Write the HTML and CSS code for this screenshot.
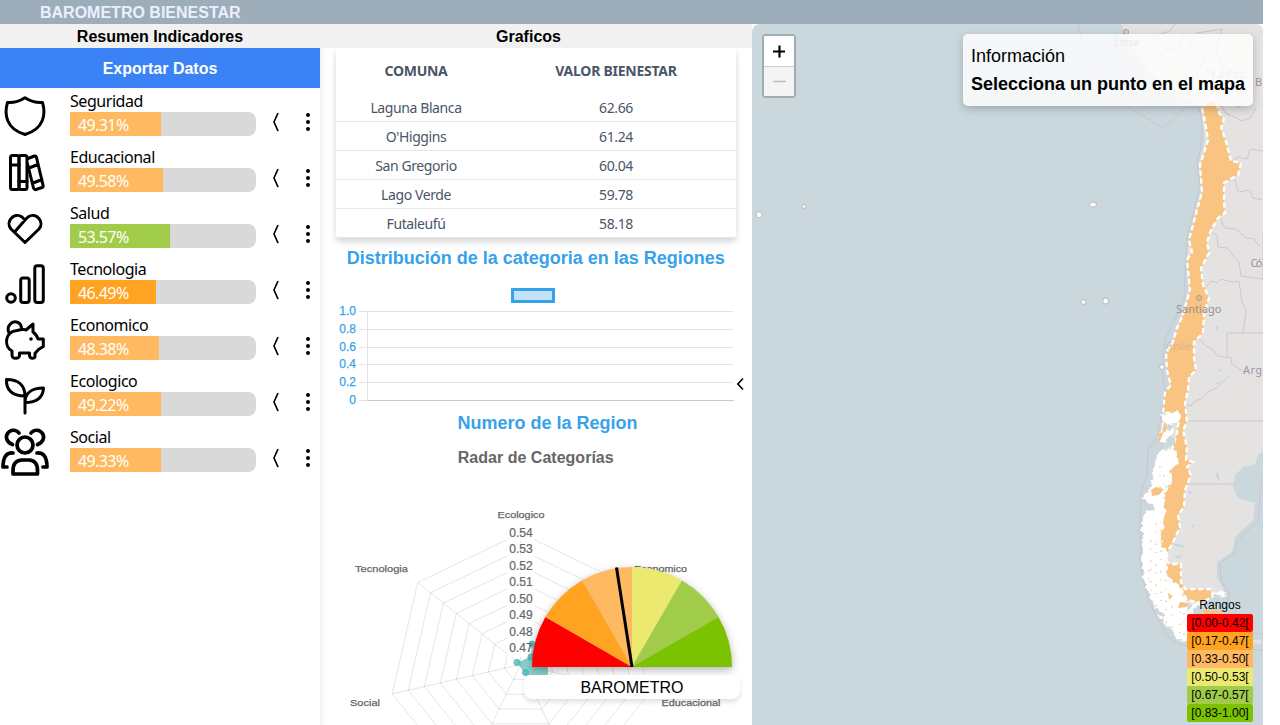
FILE: index.html
```html
<!DOCTYPE html>
<html lang="es">
<head>
<meta charset="utf-8">
<title>Barometro Bienestar</title>
<link rel="stylesheet" href="styles.css">
</head>
<body>
<div class="app">
<header class="topbar">BAROMETRO BIENESTAR</header>
<main class="columns">
<section class="summary">
  <h2 class="heading">Resumen Indicadores</h2>
  <button class="export">Exportar Datos</button>
  <div class="row"><svg class="icon" viewBox="0 0 50 50"><path d="M25 6.700C19 10.500 13 12 7.500 11.500C4 23 6 38 25 43.500C44 38 46 23 42.500 11.500C37 12 31 10.500 25 6.700Z"/></svg><div class="meter"><span class="name">Seguridad</span><div class="track"><div class="fill" style="width:49%">49.31%</div></div></div><svg class="tools" viewBox="0 0 64 56"><path d="M22 25L18 34L22 43"/><circle cx="52" cy="27" r="2"/><circle cx="52" cy="34" r="2"/><circle cx="52" cy="41" r="2"/></svg></div>
  <div class="row"><svg class="icon" viewBox="0 0 50 50"><rect x="10.500" y="8.500" width="8.500" height="34" rx="2"/><rect x="19" y="8.500" width="8" height="34" rx="2"/><path d="M10.500 18h8.500M19 34.500h8M28 11.500L34.500 9Q36 8.500 36.500 10.500L43 38Q43.500 40 42 40.500L36 42.500Q34 43 33.500 41L27.500 17M29 21L38 17.500M33 36L42 32.500"/></svg><div class="meter"><span class="name">Educacional</span><div class="track"><div class="fill" style="width:49.9%">49.58%</div></div></div><svg class="tools" viewBox="0 0 64 56"><path d="M22 25L18 34L22 43"/><circle cx="52" cy="27" r="2"/><circle cx="52" cy="34" r="2"/><circle cx="52" cy="41" r="2"/></svg></div>
  <div class="row"><svg class="icon" viewBox="0 0 50 50"><path d="M25 39.500L11 26C5 19 14 8.500 22 14L25 17L28 14C36 8.500 45 19 39 26ZM25 17L15.500 28"/></svg><div class="meter"><span class="name">Salud</span><div class="track"><div class="fill green" style="width:53.7%">53.57%</div></div></div><svg class="tools" viewBox="0 0 64 56"><path d="M22 25L18 34L22 43"/><circle cx="52" cy="27" r="2"/><circle cx="52" cy="34" r="2"/><circle cx="52" cy="41" r="2"/></svg></div>
  <div class="row"><svg class="icon" viewBox="0 0 50 50"><circle cx="11" cy="39" r="4.300"/><rect x="20.700" y="19" width="8.500" height="24.500" rx="2.500"/><rect x="34.800" y="6.700" width="8.500" height="36.800" rx="2.500"/></svg><div class="meter"><span class="name">Tecnologia</span><div class="track"><div class="fill dark" style="width:46.49%">46.49%</div></div></div><svg class="tools" viewBox="0 0 64 56"><path d="M22 25L18 34L22 43"/><circle cx="52" cy="27" r="2"/><circle cx="52" cy="34" r="2"/><circle cx="52" cy="41" r="2"/></svg></div>
  <div class="row"><svg class="icon" viewBox="0 0 50 50"><path d="M17 15.500C22 14 25 14.500 26 15L33 9V17Q37 20 38 24H43.300V31.500L38.500 34.500L35 38.500V42Q34.500 43.300 32.500 43.300Q30 43.300 29.500 41V38H19.500V41Q18.500 43.300 16 43.300Q12 43.500 12 40V36C4 32 4 17 17 15.500ZM9 18C6 11 12 5 18 7.500Q21.500 9 21.500 14"/><circle class="dot" cx="31" cy="24" r="1.800"/></svg><div class="meter"><span class="name">Economico</span><div class="track"><div class="fill" style="width:48%">48.38%</div></div></div><svg class="tools" viewBox="0 0 64 56"><path d="M22 25L18 34L22 43"/><circle cx="52" cy="27" r="2"/><circle cx="52" cy="34" r="2"/><circle cx="52" cy="41" r="2"/></svg></div>
  <div class="row"><svg class="icon" viewBox="0 0 50 50"><path d="M25 42V25C25 14 18 8.500 6.500 8.500C6 19 12 25 25 25M25 31.500C25 22 32 17 43.500 17C43 26 38 31.500 25 31.500"/></svg><div class="meter"><span class="name">Ecologico</span><div class="track"><div class="fill" style="width:49%">49.22%</div></div></div><svg class="tools" viewBox="0 0 64 56"><path d="M22 25L18 34L22 43"/><circle cx="52" cy="27" r="2"/><circle cx="52" cy="34" r="2"/><circle cx="52" cy="41" r="2"/></svg></div>
  <div class="row"><svg class="icon people" viewBox="0 0 50 50"><circle cx="25" cy="18" r="8"/><path d="M13 47V43.500Q13 33.500 22 33H29Q37.500 33.500 37.500 43.500V47ZM12.500 17.500C7 15.500 5 10.500 7.500 6.500C10 2.500 16 2 19 6M37.500 17.500C43 15.500 45 10.500 42.500 6.500C40 2.500 34 2 31 6M13 26C6 25.500 3 30.500 3 40H7M37 26C44 25.500 47 30.500 47 40H43"/></svg><div class="meter"><span class="name">Social</span><div class="track"><div class="fill" style="width:49%">49.33%</div></div></div><svg class="tools" viewBox="0 0 64 56"><path d="M22 25L18 34L22 43"/><circle cx="52" cy="27" r="2"/><circle cx="52" cy="34" r="2"/><circle cx="52" cy="41" r="2"/></svg></div>
</section>
<section class="charts">
  <h2 class="heading graph-heading">Graficos</h2>
  <table class="ranking">
    <thead><tr><th>COMUNA</th><th>VALOR BIENESTAR</th></tr></thead>
    <tbody><tr><td>Laguna Blanca</td><td>62.66</td></tr><tr><td>O'Higgins</td><td>61.24</td></tr><tr><td>San Gregorio</td><td>60.04</td></tr><tr><td>Lago Verde</td><td>59.78</td></tr><tr><td>Futaleufú</td><td>58.18</td></tr></tbody>
  </table>
  <svg class="plots" viewBox="320 238 432 487">
    <g class="blue title" text-anchor="middle"><text x="535.700" y="264" textLength="378">Distribución de la categoria en las Regiones</text><text x="547.500" y="429" textLength="180">Numero de la Region</text></g>
    <rect x="512.500" y="289.500" width="41" height="12" fill="#c2e2f9" stroke="#36a2eb" stroke-width="3"/>
    <path d="M359 311.500H733M359 329.500H733M359 347.500H733M359 364.500H733M359 382.500H733M359 400.500H733M367.500 311V401" stroke="#e3e3e3"/><path d="M367 400.500H734" stroke="#cacaca"/>
    <g class="blue tick" text-anchor="end"><text x="356" y="315">1.0</text><text x="356" y="333">0.8</text><text x="356" y="351">0.6</text><text x="356" y="368">0.4</text><text x="356" y="386">0.2</text><text x="356" y="404">0</text></g>
    <text class="radar-title" x="535.700" y="463" text-anchor="middle" textLength="156">Radar de Categorías</text>
    <defs><path id="ring" vector-effect="non-scaling-stroke" d="M0-1L.7818-.6235L.9749.2225L.4339.901L-.4339.901L-.9749.2225L-.7818-.6235Z"/></defs>
    <g transform="translate(520.500 664.600)" fill="none" stroke="#000" stroke-opacity=".1">
      <use href="#ring" transform="scale(131.500)"/><use href="#ring" transform="scale(115.100)"/><use href="#ring" transform="scale(98.600)"/><use href="#ring" transform="scale(82.200)"/><use href="#ring" transform="scale(65.700)"/><use href="#ring" transform="scale(49.300)"/><use href="#ring" transform="scale(32.900)"/><use href="#ring" transform="scale(16.400)"/>
      <path d="M0 0V-131.500M0 0L102.800-82M0 0L128.200 29.300M0 0L57 118.500M0 0L-57 118.500M0 0L-128.200 29.300M0 0L-102.800-82"/>
    </g>
    <path fill="#fff" fill-opacity=".75" d="M507 525h28v132h-28z"/>
    <path d="M517 662.500L531 656.500L532 644H548V675H526Z" fill="#4bb5b5" fill-opacity=".65"/>
    <g fill="#4bc0c0" fill-opacity=".8" stroke="#4bb5b5"><circle cx="517" cy="662.500" r="3"/><circle cx="531" cy="657" r="3"/><circle cx="532" cy="644" r="3"/><circle cx="525.500" cy="672.500" r="3"/></g>
    <g class="radar-tick" text-anchor="middle"><text x="521" y="537">0.54</text><text x="521" y="553">0.53</text><text x="521" y="570">0.52</text><text x="521" y="586">0.51</text><text x="521" y="603">0.50</text><text x="521" y="619">0.49</text><text x="521" y="636">0.48</text><text x="521" y="652">0.47</text></g>
    <g class="axis"><text x="497.500" y="518" textLength="47" lengthAdjust="spacingAndGlyphs">Ecologico</text><text x="355" y="572" textLength="53" lengthAdjust="spacingAndGlyphs">Tecnologia</text><text x="634" y="572" textLength="53" lengthAdjust="spacingAndGlyphs">Economico</text><text x="350" y="706" textLength="30" lengthAdjust="spacingAndGlyphs">Social</text><text x="661.500" y="706" textLength="59" lengthAdjust="spacingAndGlyphs">Educacional</text></g>
  </svg>
  <svg class="gauge" viewBox="0 0 216 108">
    <g transform="translate(108 103)"><path d="M0 0L-100 0A100 100 0 0 1-86.600-50Z" fill="red"/><path d="M0 0L-86.600-50A100 100 0 0 1-50-86.600Z" fill="#ffa321"/><path d="M0 0L-50-86.600A100 100 0 0 1 0-100Z" fill="#ffb961"/><path d="M0 0V-100A100 100 0 0 1 50-86.600Z" fill="#ece970"/><path d="M0 0L50-86.600A100 100 0 0 1 86.600-50Z" fill="#a1cc49"/><path d="M0 0L86.600-50A100 100 0 0 1 100 0Z" fill="#7bc200"/><path d="M0 0L-15.500-99.500" stroke="#000" stroke-width="3"/></g>
  </svg>
  <div class="gauge-label">BAROMETRO</div>
  <svg class="collapse" viewBox="0 0 8 14"><path d="M7 1.500L1.800 7L7 12.500"/></svg>
</section>
<section class="map">
  <svg class="geography" viewBox="752 24 511 701">
    <defs>
      <filter id="coast" x="-10%" y="-5%" width="120%" height="110%"><feTurbulence type="fractalNoise" baseFrequency=".16" numOctaves="2" seed="4"/><feDisplacementMap in="SourceGraphic" scale="9" xChannelSelector="R" yChannelSelector="G"/></filter>
    </defs>
    <path class="land" d="M1121 24L1128 40L1138 57L1150 73L1173 93L1201 107L1205 140L1199 165L1201 192L1190 237L1187 260L1189 290L1173 340L1166 355L1170 385L1163 415L1166 450L1155 480L1158 540L1170 600L1195 605L1225 593L1217 577L1217 562L1232 552L1235 537L1253 520L1255 503L1238 498L1233 487L1235 475L1243 467L1255 464L1258 455L1263 451V24Z"/>
    <path class="land" d="M1252 640l9 0v4l-9-1z"/>
    <g class="water"><path d="M1206 69l9 2l-2 7l-6-4ZM1225 111l6 4l-2 2zM1236 105l5 1l-3 3zM1216 326h2v5h-2zM1218 370l5-1l-2 3zM1215 384l6-4l-3 5zM1215 474l3-2l2 10l-3-3zM1188 490l6 3l-5 1zM1173 543l10 2l1 3l-9-2zM1173 555l9 1l-3 3zM1192 524l3 2l-3 2z"/></g>
    <g class="borders"><path d="M1078 24L1083 46L1096 58L1106 83L1128 106L1145 117L1163 128L1186 107H1203M1143 54Q1150 35 1170 31L1175 24M1139 55L1156 65L1164 49L1177 51L1184 34M1183 88L1197 77L1204 58L1190 45L1197 33L1222 29L1216 52L1228 82M1222 106L1225 113L1233 116L1241 121L1250 118L1256 108M1231 162L1238 157L1247 159L1250 149L1263 151M1225 180L1235 180L1238 192L1250 190L1253 198L1263 200M1220 218L1225 228L1236 229L1246 238L1254 239L1259 246M1209 231L1217 235L1218 247L1227 248L1239 262L1241 276L1263 279M1204 290L1211 281L1217 283L1221 279L1232 282L1239 281L1242 302L1246 311L1243 333H1263M1198 337L1206 346L1213 350L1218 356L1232 358L1231 363L1246 373M1227 358V333H1243M1230 375L1218 387L1208 392L1203 398L1195 401L1191 406L1185 404M1188 421H1263M1188 484H1234M1263 233V281"/><path d="M1199 107Q1206 133 1197 163L1200 185L1187 238L1185 275L1184 300L1165 340L1162 370L1165 390L1158 435L1148 450L1147 475L1141 493L1140 530L1141 570L1149 603L1168 637L1180 645L1263 650"/><path d="M1262 478L1258 520L1237 542L1235 553L1220 563L1221 580L1230 595L1226 607L1233 630L1263 634"/></g>
    <path class="chile" d="M1211.700 97L1217 105L1219 113L1224 119L1221 128L1225 138L1231 161L1241 163L1238 175L1224 183V203L1225 213L1218 218L1211 230L1207 242L1209 253L1201 268L1203 285L1209 298L1204 313L1203 333L1194 342V358L1196 370L1189 377L1188 390L1185 403L1187 422L1183 430L1187 447L1186 460L1193 462L1187 467L1191 475L1185 490L1184 507L1178 515L1180 527L1173 542L1167 553V562L1171 564H1181V582L1185 589H1210L1213 596L1202 603L1187 600L1180 587L1167 577L1165 572L1166 555L1158 540L1162 525L1163 510L1162 497L1172 480L1169 470L1177 463L1172 450L1177 433L1180 413H1163L1165 393L1170.700 385L1167 370L1166 353L1173 342L1177 328L1183 315L1190 290L1187 260L1192 252L1189 240L1197 210L1202 192L1200 165L1204 153L1208 140L1206 127L1202 107Z"/>
    <g class="fjords" filter="url(#coast)"><path d="M1162 414L1180 413L1180 420L1171 422L1174 432L1166 440L1161 443L1158 440L1162 426Z"/><path d="M1164 448L1174 451L1178 463L1169 470L1171 481L1163 495L1165 510L1163 525L1160 541L1168 554L1166 577L1180 589L1186 602L1202 604L1190 614L1189 641L1180 640L1167 626L1155 608L1147 587L1142 566L1142 520L1149 506L1143 497L1151 487L1153 470L1156 458Z"/><path d="M1212 589L1227 594L1222 598L1214 593Z"/></g>
    <g class="inland"><path d="M1164 422l3 2l-1 7l-4 3zM1160 432l3 2l-3 7l-3-1zM1151 490l5-3l8 2l-5 6l-7 1zM1180 602l9 1l-2 4l-9 1zM1168 593l5 3l-4 4zM1204 609l18 2v18h-22z"/><path class="specks" d="M1160 466V494M1164 475V492M1151 540V608M1156 523V615M1161 530V622M1149 570V590M1166 580V624M1172 606V631M1180 603V634M1184 613V636"/></g>
    <g class="water"><path d="M1156 610l9 4l-1 3l-8-3zM1188 604l5 1l-6 7zM1214 594l8 2l-4 3l-5-3zM1168 424l5 2l-3 5l-4-2zM1169 436l6 2v6l-9 4v-4zM1145 503l8 1l2 6l-8 1z"/></g>
    <g class="islets"><circle cx="759" cy="214.800" r="3"/><circle cx="804" cy="206.500" r="2"/><ellipse cx="1093" cy="204.500" rx="3.500" ry="2.500"/><circle cx="1083.500" cy="302" r="2.500"/><circle cx="1105.700" cy="301" r="3"/><circle cx="1162" cy="367" r="2.500"/></g>
    <g class="places"><circle cx="1126" cy="32" r="2.500"/><circle class="pin" cx="1126" cy="32" r=".7"/><circle cx="1199" cy="298" r="2.500"/><circle class="pin" cx="1199" cy="298" r=".7"/><text x="1114" y="46">Lima</text><text x="1212" y="78" opacity=".6">La Paz</text><text x="1176" y="313">Santiago</text><text x="1166" y="350" opacity=".3">Chile</text><text x="1250.500" y="267" textLength="12">Có</text><text x="1243" y="374" fill="#a690a6" textLength="19">Arg</text><text x="1255" y="86" fill="#a690a6">B</text></g>
  </svg>
  <div class="zoom"><svg viewBox="0 0 30 30"><path d="M9 15.500H21M15.500 9.500V21.500"/></svg><svg class="disabled" viewBox="0 0 30 30"><path d="M9 15H22"/></svg></div>
  <div class="info"><span>Información</span><strong>Selecciona un punto en el mapa</strong></div>
  <div class="legend"><span class="legend-title">Rangos</span><span class="r1">[0.00-0.42[</span><span class="r2">[0.17-0.47[</span><span class="r3">[0.33-0.50[</span><span class="r4">[0.50-0.53[</span><span class="r5">[0.67-0.57[</span><span class="r6">[0.83-1.00]</span></div>
</section>
</main>
</div>
</body>
</html>
```
FILE: styles.css
```css
* { box-sizing: border-box; }
body { margin: 0; overflow: hidden; background: #fff; font: 16px/24px "Liberation Sans", Arial, sans-serif; }
.app { width: 1263px; height: 725px; overflow: hidden; }
.topbar { height: 24px; padding-left: 40px; background: #9eadba; color: #ebf0ff; font-weight: bold; line-height: 26px; }
.columns { display: grid; grid-template-columns: 320px 432px 511px; height: 701px; background: #fff; }
.heading { position: relative; margin: 0; height: 24px; background: #f1f1f1; text-align: center; font-size: 16px; line-height: 26px; }
.summary { box-shadow: 0 4px 6px rgba(0,0,0,.12); clip-path: inset(0 -8px 0 0); }
.export { display: block; width: 100%; height: 40px; padding: 1px 0 0; border: 0; background: #3b82f6; color: #fff; font: bold 16px/40px "Liberation Sans", Arial, sans-serif; }
.row { display: grid; grid-template-columns: 50px 186px 64px; column-gap: 20px; height: 56px; align-items: center; }
.row .tools { margin-left: -20px; }
.icon { width: 50px; height: 50px; fill: none; stroke: #000; stroke-width: 3; stroke-linecap: round; stroke-linejoin: round; }
.people { stroke-width: 3.7; }
.icon .dot { fill: #000; stroke: none; }
.meter { height: 56px; font-family: "Noto Sans", sans-serif; }
.name { display: block; height: 24px; line-height: 27px; letter-spacing: -.45px; }
.track { height: 24px; border-radius: 0 8px 8px 0; background: #d9d9d9; }
.fill { height: 24px; padding-left: 8px; color: #fff; background: #ffb961; line-height: 27px; letter-spacing: -.6px; }
.fill.green { background: #a1cc49; }
.fill.dark { background: #ffa321; }
.tools { width: 64px; height: 56px; }
.tools path { fill: none; stroke: #000; stroke-width: 1.7; stroke-linejoin: round; }
.charts { position: relative; }
.graph-heading { padding-right: 15px; }
.ranking { width: 400px; margin: 0 16px; border-spacing: 0; table-layout: fixed; border-radius: 0 0 4px 4px; box-shadow: 0 4px 6px rgba(0,0,0,.16); color: #4a5568; font: 14px/20px "Noto Sans", sans-serif; text-align: center; }
.ranking th { width: 50%; height: 45px; padding: 0 40px 0 0; font-size: 14px; letter-spacing: -.25px; white-space: nowrap; }
.ranking td { height: 29px; padding: 1px 40px 0 0; border-bottom: 1px solid #e5e7eb; letter-spacing: -.4px; }
.plots { display: block; width: 432px; height: 487px; }
.blue { fill: #36a2eb; }
.title { font-size: 18px; font-weight: bold; }
.tick { font-size: 12px; stroke: #36a2eb; stroke-width: .25px; }
.radar-title { fill: #666; font-size: 16px; font-weight: bold; }
.radar-tick { fill: #666; font-size: 12px; stroke: #666; stroke-width: .2px; }
.axis { fill: #666; font-size: 9.8px; stroke: #666; stroke-width: .25px; }
.gauge { position: absolute; left: 204px; top: 540px; width: 216px; height: 108px; overflow: visible; filter: drop-shadow(0 3px 4px rgba(0,0,0,.3)); }
.gauge-label { position: absolute; left: 204px; top: 651px; width: 216px; height: 24px; border-radius: 8px; background: #fff; box-shadow: 0 3px 5px rgba(0,0,0,.12); text-align: center; line-height: 26px; }
.collapse { position: absolute; left: 416px; top: 353px; width: 8px; height: 14px; fill: none; stroke: #000; stroke-width: 1.6; }
.map { position: relative; overflow: hidden; border-radius: 8px 8px 0 0; background: #cad8dd; }
.geography { display: block; width: 511px; height: 701px; }
.land { fill: #e5e3e2; }
.water { fill: #cad8dd; }
.borders { fill: none; stroke: #c9bfca; stroke-width: .8; }
.chile { fill: #ffb961; fill-opacity: .75; stroke: #fff; stroke-width: 2.3; stroke-dasharray: 5 3; }
.fjords { fill: #fff; }
.inland { fill: #f7c485; }
.specks { stroke: #f7c485; stroke-width: 1.3; stroke-dasharray: 1.5 7 1 11; }
.islets { fill: #fff; stroke: #c5c4ce; stroke-width: 1.3; }
.places { fill: #969292; font: 11px "Noto Sans", sans-serif; }
.places circle { fill: none; stroke: #999; }
.places .pin { fill: #999; stroke: none; }
.zoom { position: absolute; left: 10px; top: 10px; width: 34px; height: 64px; border: 2px solid rgba(0,0,0,.2); border-radius: 4px; background-clip: padding-box; }
.zoom svg { display: block; width: 30px; height: 30px; background: #fff; stroke: #000; stroke-width: 2.2; }
.zoom .disabled { border-top: 1px solid #ccc; background: #f4f4f4; stroke: #bbb; stroke-width: 1.7; }
.info { position: absolute; right: 10px; top: 10px; width: 290px; height: 72px; padding: 8px; border-radius: 5px; background: rgba(255,255,255,.8); box-shadow: 0 3px 8px rgba(0,0,0,.22); font-size: 18px; line-height: 28px; white-space: nowrap; }
.info span, .info strong { display: block; }
.legend { position: absolute; right: 10px; bottom: 3px; width: 66px; font-size: 12px; line-height: 18px; text-align: center; }
.legend span { display: block; height: 18px; border-radius: 2px; }
.r1 { background: red; } .r2 { background: #ffa321; } .r3 { background: #ffb961; } .r4 { background: #ece970; } .r5 { background: #a1cc49; } .r6 { background: #7bc200; }
```
